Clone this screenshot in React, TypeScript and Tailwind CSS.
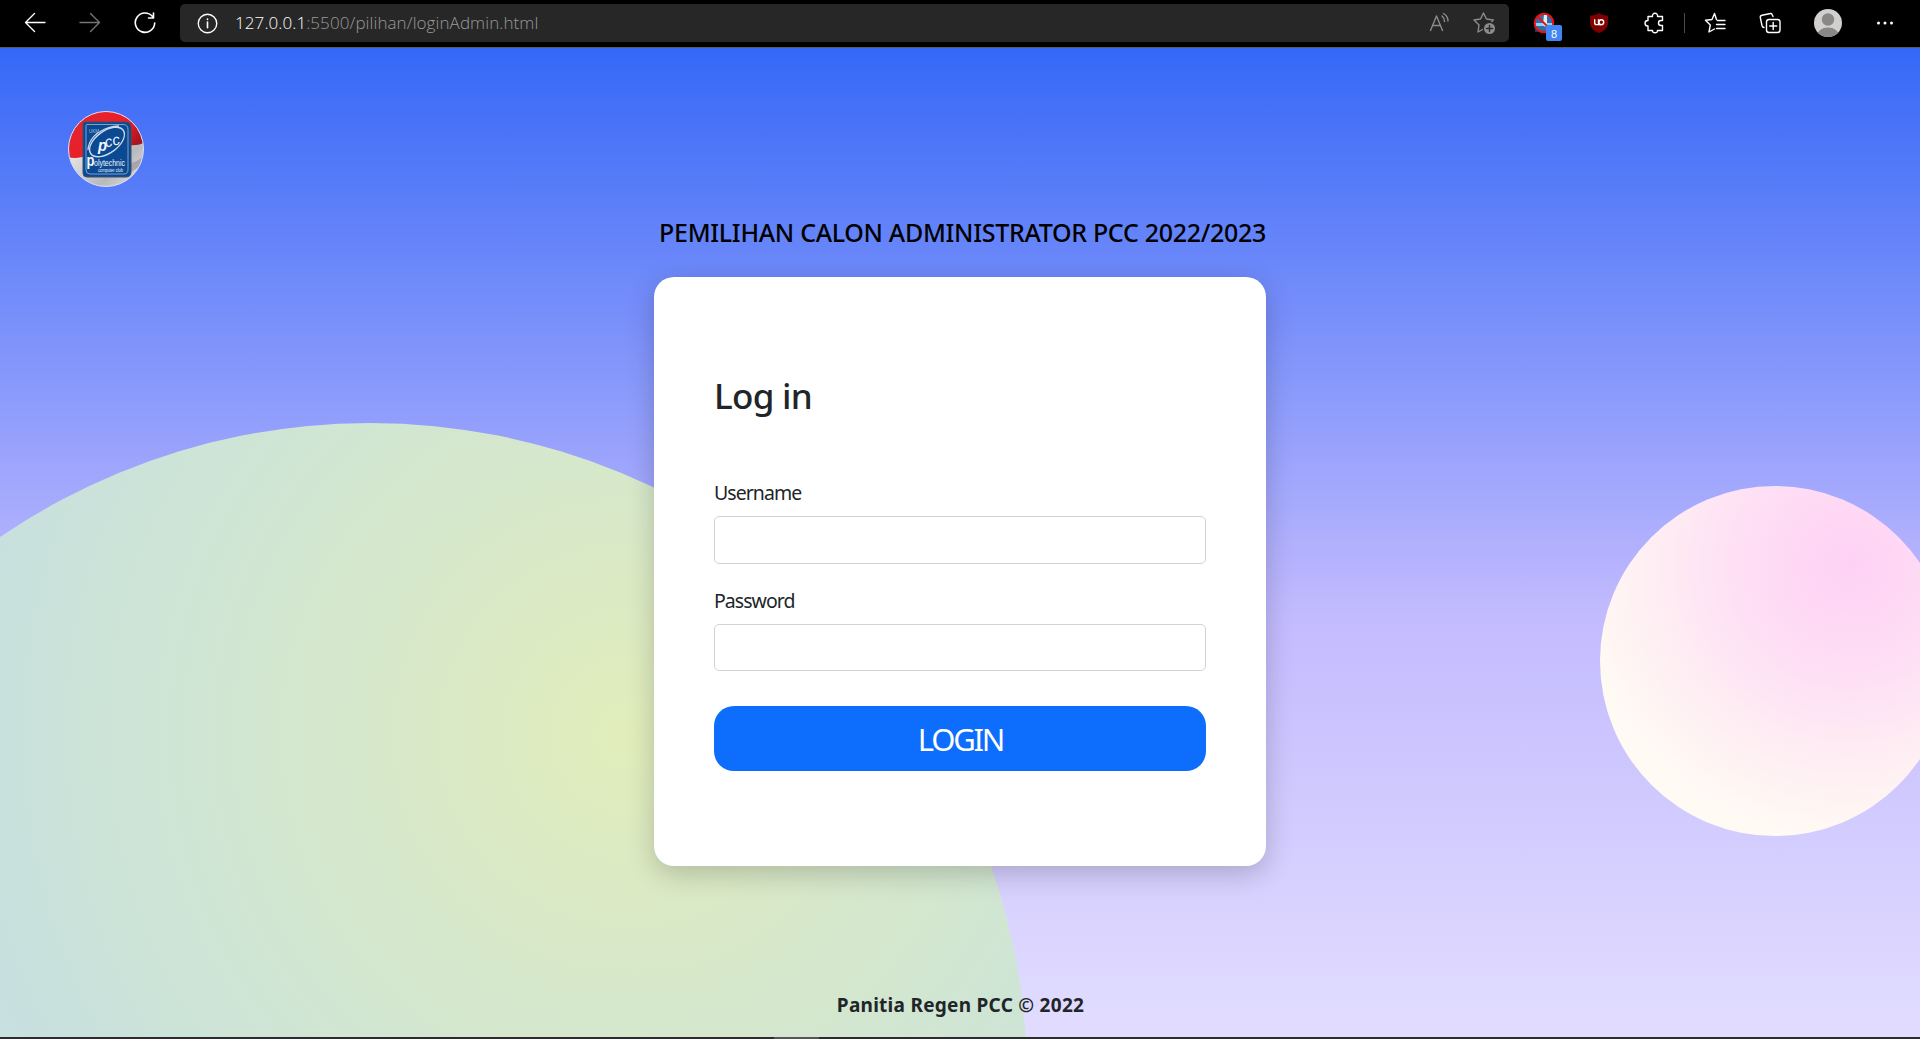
import React from "react";

const line = { fill: "none", stroke: "currentColor", strokeWidth: 1.4, strokeLinecap: "round" as const, strokeLinejoin: "round" as const };

function Toolbar() {
  return (
    <header className="flex h-[48px] shrink-0 items-center border-b border-[#5a5a5a] bg-black pb-px text-white">
      <div className="flex w-[180px] items-center">
        <svg className="ml-6 size-[22px]" viewBox="0 0 22 22" {...line}><path d="M21 10.500H1.500M10.500 1.500 1.500 10.500l9 9" /></svg>
        <svg className="ml-[33px] size-[22px] text-[#757575]" viewBox="0 0 22 22" {...line}><path d="M1 10.500h19.500M11.500 1.500l9 9-9 9" /></svg>
        <svg className="ml-[33px] size-[22px]" viewBox="0 0 22 22" {...line} strokeWidth={1.6}><path d="M18.500 4.500A9.700 9.700 0 1 0 20.700 11M19.500 1v5h-5" /></svg>
      </div>
      <div className="flex h-[38px] w-[1329px] items-center rounded-[5px] bg-[#272727]">
        <svg className="ml-[17px] size-[21px]" viewBox="0 0 22 22" {...line}><circle cx="11" cy="11" r="9.700" /><path d="M11 9.500v6M11 6.300v.4" strokeWidth="1.700" /></svg>
        <div className="ml-[17px] whitespace-nowrap pb-px font-['Open_Sans','Noto_Sans',sans-serif] text-[17px] font-light tracking-[0.09px] text-[#9a9a9a]"><span className="text-white">127.0.0.1</span>:5500/pilihan/loginAdmin.html</div>
        <svg className="ml-auto size-[22px] text-[#8c8c8c]" viewBox="0 0 22 22" {...line}><path d="M2.500 18.500 8.500 4 14.500 18.500M4.500 13.500h8M14 4a7 7 0 0 1 2.500 5.500M15.500 1.500A9 9 0 0 1 20 9" /></svg>
        <svg className="mr-[13px] ml-[22px] size-6 text-[#8c8c8c]" viewBox="0 0 24 24" {...line}><path d="M10.500 18.500 6 21l1-7-5-5 6.500-1L11.500 2l3 6 6.800 1-1.500 1.500" /><circle cx="17.500" cy="17.500" r="5.500" fill="currentColor" stroke="none" /><path d="M17.500 14.500v6M14.500 17.500h6" stroke="#272727" /></svg>
      </div>
      <div className="flex flex-1 items-center">
        <div className="relative ml-[24px] size-[22px]">
          <svg className="size-[22px]" viewBox="0 0 22 22"><path d="M1 10h20v10H2z" fill="#173a5e" /><circle cx="11" cy="11" r="9" fill="#2f6ea6" /><path d="M2 11h17v3H2z" fill="#8bd0f7" /><path d="M11 3h3v9l-2 3-2-3z" fill="#e2eef6" /><circle cx="11" cy="11" r="9.300" fill="none" stroke="#f01010" strokeWidth="2" /><path d="m4.500 4.500 13 13" stroke="#f01010" strokeWidth="2" /></svg>
          <span className="absolute top-[13px] left-[13px] flex h-[16px] w-[16px] items-center justify-center rounded-[2px] bg-[#4285f4] pt-[2px] font-['Liberation_Sans',sans-serif] text-[11px] leading-none">8</span>
        </div>
        <svg className="ml-[35px] h-5 w-[18px]" viewBox="0 0 18 20"><path d="M9 0c3 2 6 2.500 9 2.500V10c0 5-4 8-9 10-5-2-9-5-9-10V2.500C3 2.500 6 2 9 0Z" fill="#800000" /><path d="M4.700 6.300v3.400q0 1.900 1.900 1.900h4.600M8.500 6.300v5.300" fill="none" stroke="#fff" strokeWidth="1.400" /><circle cx="11.300" cy="9.200" r="2.400" fill="none" stroke="#fff" strokeWidth="1.400" /></svg>
        <svg className="ml-[36px] size-[22px]" viewBox="0 0 22 22" {...line}><path d="M4 4.500H8.500C8 2.500 9.500 1.200 11 1.200s3 1.300 2.500 3.300H18.500V8.500H17a2.500 2.500 0 0 0 0 5h1.500V18.500h-5c.3 1.500-1 2.300-2.500 2.300s-2.800-.8-2.500-2.300H4V14C2 14 1 12.500 1 11.200S2 8.500 4 8.500Z" /></svg>
        <span className="ml-[18px] h-5 w-px bg-[#484848]" />
        <svg className="ml-[19px] size-[22px]" viewBox="0 0 22 22" {...line}><path d="M12.500 7.500 10.500 1.500 8 7.500l-6.500.8 4.800 4.600L5 20l5.500-3M13.500 8.500h7.500M12.500 12.500H21M12.500 16.500H21" /></svg>
        <svg className="ml-[33px] size-[22px]" viewBox="0 0 22 22" {...line}><path d="M14 4.500 13 2.300Q12.600 1.300 11.500 1.500L3 3.300Q1 3.800 1.300 5.500L3 13.500q.5 2 2 2" /><rect x="7.500" y="7.500" width="13.500" height="13" rx="2.500" /><path d="M14.200 10.500v7M10.700 14h7" /></svg>
        <svg className="ml-[33px] size-[28px]" viewBox="0 0 28 28"><defs><clipPath id="avatar"><circle cx="14" cy="14" r="14" /></clipPath></defs><g clipPath="url(#avatar)"><path d="M0 0h28v28H0z" fill="#d2d0ce" /><circle cx="14" cy="10.500" r="6.200" fill="#8a8886" /><ellipse cx="14" cy="27" rx="11" ry="8.500" fill="#8a8886" /></g></svg>
        <svg className="ml-[34px] h-1 w-[18px]" viewBox="0 0 18 4" fill="#fff"><circle cx="2.500" cy="2" r="1.500" /><circle cx="9" cy="2" r="1.500" /><circle cx="15.500" cy="2" r="1.500" /></svg>
      </div>
    </header>
  );
}

function Logo() {
  return (
    <svg className="size-[76px]" viewBox="0 0 76 76">
      <defs>
        <clipPath id="disc"><circle cx="38" cy="38" r="37.500" /></clipPath>
        <linearGradient id="cloth" x1="0" y1="0" x2="1" y2="1"><stop offset="0.300" stopColor="#e6e6e8" /><stop offset="0.700" stopColor="#b9b9bd" /><stop offset="1" stopColor="#e9e9ea" /></linearGradient>
        <linearGradient id="red" x1="0" y1="0" x2="1" y2="0.500"><stop offset="0" stopColor="#dc2733" /><stop offset="0.750" stopColor="#f01c25" /><stop offset="1" stopColor="#a31620" /></linearGradient>
      </defs>
      <g clipPath="url(#disc)">
        <path d="M0 0h76v76H0z" fill="url(#cloth)" />
        <path d="M0 0h76v32q-8 3-14 2L14 46Q6 48 0 46Z" fill="url(#red)" />
        <path d="M62 52q8-1 14-8v8q-7 5-14 10Z" fill="#a6a6aa" />
      </g>
      <circle cx="38" cy="38" r="37.500" fill="none" stroke="#d9def5" />
      <path d="M17 11h41q5 0 5 6v44q0 5-5 5H19q-4 0-4-4V13q0-2 2-2Z" fill="#0b4a93" stroke="#3a5068" />
      <path d="M19 13.500h36q5 0 5 5v40q0 4.500-4 4.500H22q-4 0-4-4V14.500q0-1 1-1Z" fill="none" stroke="#9db6d3" strokeWidth="0.800" />
      <g fill="none" stroke="#cbdcee" strokeWidth="1.300">
        <ellipse cx="39" cy="31" rx="20" ry="11" transform="rotate(-36 39 31)" />
        <path d="M20 39Q21 25 37 18q8-3 14-3" />
      </g>
      <g fill="#f1f6fb" fontFamily="Liberation Sans, sans-serif">
        <text x="21" y="22" fontSize="4.500" fill="#a4bddb">UKM</text>
        <text x="30" y="40" fontSize="17" fontWeight="bold" fontStyle="italic" textLength="9" lengthAdjust="spacingAndGlyphs">p</text>
        <text x="38" y="36.500" fontSize="15" fontStyle="italic" textLength="15" lengthAdjust="spacingAndGlyphs" transform="rotate(-14 38 36)">cc</text>
        <text x="18.500" y="55" fontSize="17" fontWeight="bold" textLength="8" lengthAdjust="spacingAndGlyphs">p</text>
        <text x="26" y="55" fontSize="8.500" textLength="31" lengthAdjust="spacingAndGlyphs">olytechnic</text>
        <text x="30" y="60.500" fontSize="4.500" textLength="25" lengthAdjust="spacingAndGlyphs">computer club</text>
      </g>
    </svg>
  );
}

function Field({ label, type, className }: { label: string; type: string; className: string }) {
  return (
    <label className="block text-[19.5px] leading-[30px] tracking-[-0.95px]">
      <span className="block">{label}</span>
      <input type={type} className={className} />
    </label>
  );
}

export default function App() {
  return (
    <div className="flex h-[1039px] w-[1920px] flex-col overflow-hidden font-['Noto_Sans','Open_Sans',sans-serif] text-[#212529]">
      <Toolbar />
      <main className="relative isolate flex h-[989px] flex-col items-center overflow-hidden bg-[linear-gradient(180deg,#3568f7_0px,#c3bbfe_570px,#e2ddff_989px)]">
        <div className="absolute top-[375px] left-[-287px] -z-10 size-[1314px] rounded-full bg-[radial-gradient(circle_at_917px_312px,#e1edba_0px,#d9e9c8_210px,#d3e7cf_350px,#c8e1dd_640px,#c7e0e2_710px)]" />
        <div className="absolute top-[438px] left-[1600px] -z-10 size-[350px] rounded-full bg-[radial-gradient(circle_at_250px_79px,#fed1f4_0px,#fee0f5_120px,#feebf3_180px,#fffaf4_275px)]" />
        <div className="h-[156px] w-full shrink-0 pt-[63px] pl-[68px]"><Logo /></div>
        <h1 className="h-[73px] shrink-0 pt-[10px] pl-[5px] text-[25px] leading-[36px] font-medium tracking-[-0.31px] whitespace-nowrap text-black">PEMILIHAN CALON ADMINISTRATOR PCC 2022/2023</h1>
        <form className="flex h-[589px] w-[612px] shrink-0 flex-col rounded-[20px] bg-white px-[60px] pt-[94px] shadow-[0_8px_28px_rgba(0,0,0,0.2)]">
          <h2 className="text-[35px] leading-[50px] font-medium tracking-[-0.7px]">Log in</h2>
          <div className="mt-[57px]"><Field label="Username" type="text" className="mt-[8px] block h-[48px] w-full rounded-[5px] border border-[#ced4da] bg-white px-3" /></div>
          <div className="mt-[22px]"><Field label="Password" type="password" className="mt-[8px] block h-[47px] w-full rounded-[5px] border border-[#ced4da] bg-white px-3" /></div>
          <button type="button" className="mt-[35px] flex h-[65px] shrink-0 items-center justify-center rounded-[20px] bg-[#0d6efd] pt-px pl-px text-[31px] leading-none font-normal tracking-[-2.2px] text-white">LOGIN</button>
        </form>
        <footer className="mt-[124px] pl-[1px] text-[19px] leading-[30px] font-bold tracking-[0.27px] whitespace-nowrap">Panitia Regen PCC © 2022</footer>
      </main>
      <div className="h-[2px] shrink-0 bg-[#2b2b30]"><div className="ml-[774px] h-full w-[45px] bg-[#555558]" /></div>
    </div>
  );
}
